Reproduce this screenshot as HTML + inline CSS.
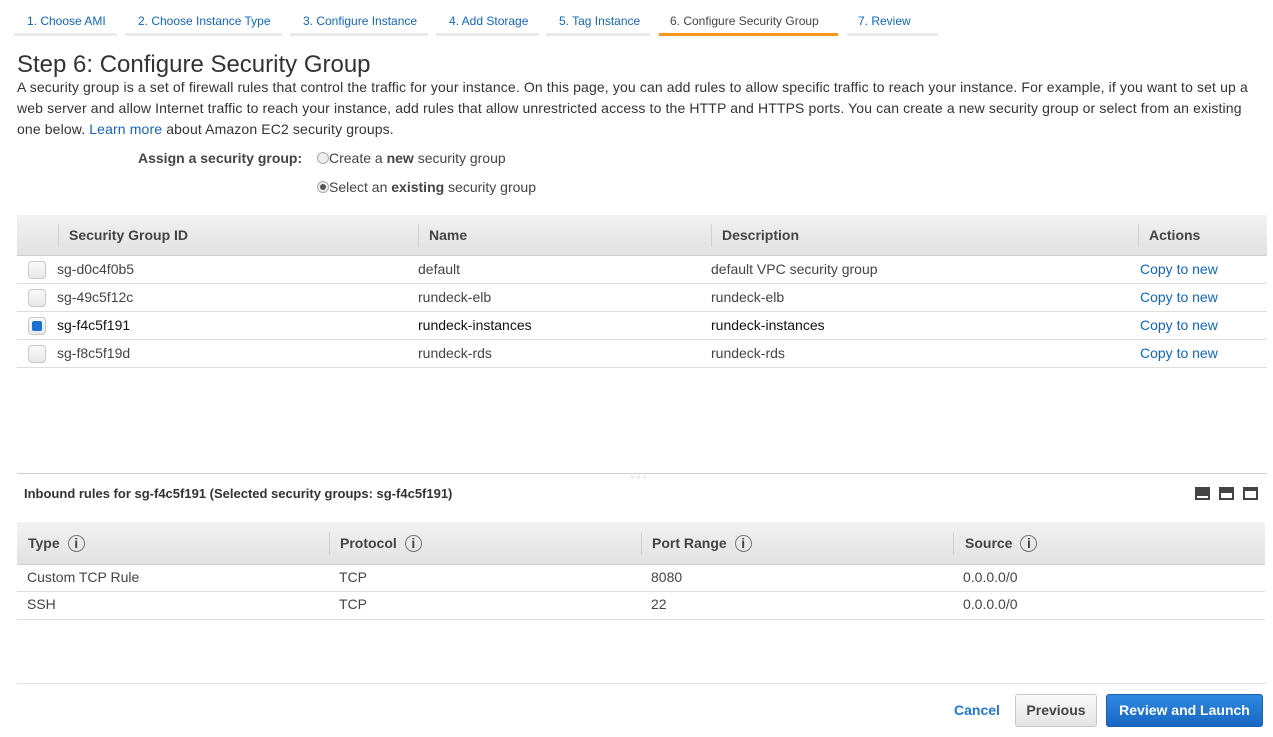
<!DOCTYPE html>
<html><head><meta charset="utf-8"><style>
*{margin:0;padding:0;box-sizing:border-box}
body{width:1273px;height:737px;overflow:hidden;background:#fff;font-family:"Liberation Sans",Arial,sans-serif;color:#444;position:relative}
.a{position:absolute;white-space:nowrap}
.tab{position:absolute;top:8px;height:28px;border-bottom:3px solid #eaeaea;font-size:12px;color:#1166bb;padding-top:6px;padding-left:13px}
.tab.on{border-bottom-color:#f7981d;color:#444}
p.t{position:absolute;left:17px;top:77px;width:1260px;font-size:14px;line-height:21px;color:#333;white-space:nowrap;letter-spacing:0.13px}
a{color:#1166bb;text-decoration:none}
.hdr{position:absolute;background:linear-gradient(#f2f2f2,#e2e2e2);border-bottom:1px solid #cfcfcf}
.hdr span{position:absolute;font-weight:bold;font-size:14px;color:#444}
.sep{position:absolute;width:1px;background:#d0d0d0}
.row{position:absolute;border-bottom:1px solid #dedede;font-size:14px;color:#444}
.row span{position:absolute;top:5px}
.cb{position:absolute;left:11px;top:5px;width:18px;height:18px;border:1px solid #c8c8c8;border-radius:4px;background:linear-gradient(#fafafa,#e8e8e8)}
.cb.on::after{content:"";position:absolute;left:3px;top:3px;width:10px;height:10px;border-radius:2px;background:#1a6fd0}
.info{display:inline-block;width:17px;height:17px;border:1px solid #777;border-radius:50%;font-size:12px;text-align:center;line-height:15px;font-weight:normal;margin-left:8px;vertical-align:-2px;color:#555}
.rad{display:inline-block;width:12px;height:12px;border:1px solid #aaa;border-radius:50%;background:#eee;vertical-align:-1px;position:relative}
.ic{position:absolute;top:487px;width:15px;height:13px;background:#444}
.ic i{position:absolute;left:2px;right:2px;background:#fff}
</style></head><body>
<div class="tab" style="left:14px;width:103px">1. Choose AMI</div>
<div class="tab" style="left:125px;width:157px">2. Choose Instance Type</div>
<div class="tab" style="left:290px;width:138px">3. Configure Instance</div>
<div class="tab" style="left:436px;width:103px">4. Add Storage</div>
<div class="tab" style="left:546px;width:104px">5. Tag Instance</div>
<div class="tab on" style="left:659px;width:179px;padding-left:11px">6. Configure Security Group</div>
<div class="tab" style="left:847px;width:91px;padding-left:11px">7. Review</div>

<div class="a" style="left:17px;top:51px;font-size:24px;color:#333">Step 6: Configure Security Group</div>
<p class="t">A security group is a set of firewall rules that control the traffic for your instance. On this page, you can add rules to allow specific traffic to reach your instance. For example, if you want to set up a<br>web server and allow Internet traffic to reach your instance, add rules that allow unrestricted access to the HTTP and HTTPS ports. You can create a new security group or select from an existing<br>one below. <a>Learn more</a> about Amazon EC2 security groups.</p>

<div class="a" style="left:138px;top:150px;font-size:14px;font-weight:bold;color:#444">Assign a security group:</div>
<div class="a" style="left:317px;top:150px;font-size:14px;color:#444"><span class="rad"></span>Create a <b>new</b> security group</div>
<div class="a" style="left:317px;top:179px;font-size:14px;color:#444"><span class="rad"><span style="position:absolute;left:2px;top:2px;width:6px;height:6px;border-radius:50%;background:#555"></span></span>Select an <b>existing</b> security group</div>

<div class="hdr" style="left:17px;top:215px;width:1250px;height:41px">
<div class="sep" style="left:41px;top:9px;height:23px"></div><span style="left:52px;top:12px">Security Group ID</span>
<div class="sep" style="left:401px;top:9px;height:23px"></div><span style="left:412px;top:12px">Name</span>
<div class="sep" style="left:694px;top:9px;height:23px"></div><span style="left:705px;top:12px">Description</span>
<div class="sep" style="left:1121px;top:9px;height:23px"></div><span style="left:1132px;top:12px">Actions</span>
</div>
<div class="row" style="left:17px;top:256px;width:1250px;height:28px"><div class="cb"></div><span style="left:40px">sg-d0c4f0b5</span><span style="left:401px">default</span><span style="left:694px">default VPC security group</span><span style="left:1123px"><a>Copy to new</a></span></div>
<div class="row" style="left:17px;top:284px;width:1250px;height:28px"><div class="cb"></div><span style="left:40px">sg-49c5f12c</span><span style="left:401px">rundeck-elb</span><span style="left:694px">rundeck-elb</span><span style="left:1123px"><a>Copy to new</a></span></div>
<div class="row" style="left:17px;top:312px;width:1250px;height:28px;color:#111"><div class="cb on"></div><span style="left:40px">sg-f4c5f191</span><span style="left:401px">rundeck-instances</span><span style="left:694px">rundeck-instances</span><span style="left:1123px"><a>Copy to new</a></span></div>
<div class="row" style="left:17px;top:340px;width:1250px;height:28px"><div class="cb"></div><span style="left:40px">sg-f8c5f19d</span><span style="left:401px">rundeck-rds</span><span style="left:694px">rundeck-rds</span><span style="left:1123px"><a>Copy to new</a></span></div>

<div class="a" style="left:17px;top:473px;width:1250px;height:1px;background:#d0d0d0"></div>
<div class="a" style="left:630px;top:474px;font-size:7px;color:#aaa;letter-spacing:2px">○○○</div>
<div class="a" style="left:24px;top:486px;font-size:13px;font-weight:bold;color:#333">Inbound rules for sg-f4c5f191 (Selected security groups: sg-f4c5f191)</div>
<div class="ic" style="left:1195px"><i style="bottom:2px;height:2px"></i></div>
<div class="ic" style="left:1219px"><i style="bottom:2px;height:5px"></i></div>
<div class="ic" style="left:1243px"><i style="bottom:2px;top:4px"></i></div>

<div class="hdr" style="left:17px;top:522px;width:1248px;height:43px">
<span style="left:11px;top:13px">Type<span class="info">i</span></span>
<div class="sep" style="left:312px;top:10px;height:23px"></div><span style="left:323px;top:13px">Protocol<span class="info">i</span></span>
<div class="sep" style="left:624px;top:10px;height:23px"></div><span style="left:635px;top:13px">Port Range<span class="info">i</span></span>
<div class="sep" style="left:936px;top:10px;height:23px"></div><span style="left:948px;top:13px">Source<span class="info">i</span></span>
</div>
<div class="row" style="left:17px;top:565px;width:1248px;height:27px"><span style="left:10px;top:4px">Custom TCP Rule</span><span style="left:322px;top:4px">TCP</span><span style="left:634px;top:4px">8080</span><span style="left:946px;top:4px">0.0.0.0/0</span></div>
<div class="row" style="left:17px;top:592px;width:1248px;height:28px"><span style="left:10px;top:4px">SSH</span><span style="left:322px;top:4px">TCP</span><span style="left:634px;top:4px">22</span><span style="left:946px;top:4px">0.0.0.0/0</span></div>

<div class="a" style="left:17px;top:683px;width:1250px;height:1px;background:#e2e2e2"></div>
<div class="a" style="left:954px;top:702px;font-size:14px;font-weight:bold;color:#1e78d6">Cancel</div>
<div class="a" style="left:1015px;top:694px;width:82px;height:33px;border:1px solid #c8c8c8;border-radius:3px;background:linear-gradient(#fafafa,#e4e4e4);font-size:14px;font-weight:bold;color:#444;text-align:center;line-height:31px">Previous</div>
<div class="a" style="left:1106px;top:694px;width:157px;height:33px;border:1px solid #1a5fb0;border-radius:3px;background:linear-gradient(#2e8ae0,#1866c2);font-size:14px;font-weight:bold;color:#fff;text-align:center;line-height:31px">Review and Launch</div>
</body></html>
